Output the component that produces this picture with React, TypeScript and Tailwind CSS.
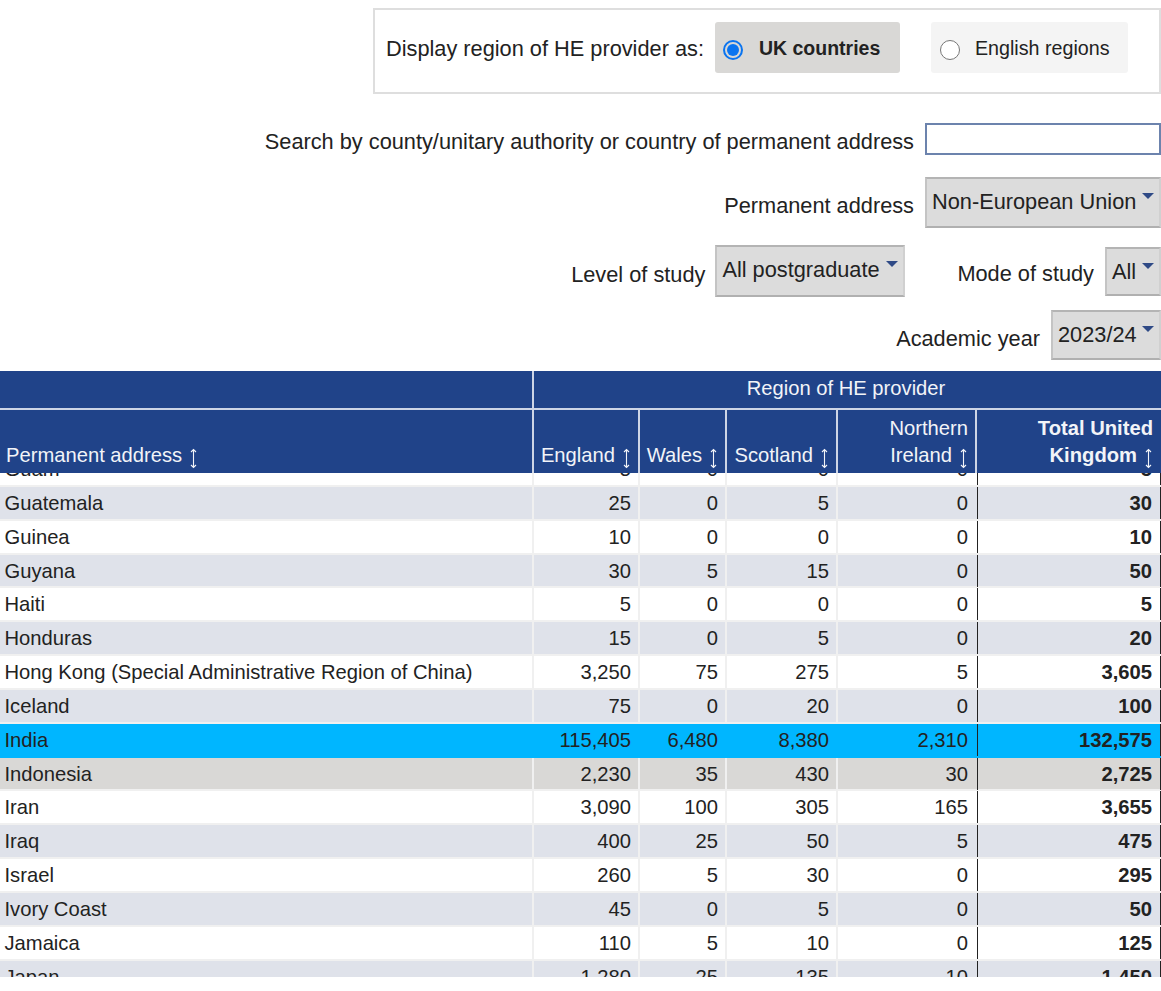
import React from "react"

const cols = "grid grid-cols-[534px_106px_87px_111px_139px_184px]"

const rows = [
  ["Guam", "5", "0", "0", "0", "5"],
  ["Guatemala", "25", "0", "5", "0", "30"],
  ["Guinea", "10", "0", "0", "0", "10"],
  ["Guyana", "30", "5", "15", "0", "50"],
  ["Haiti", "5", "0", "0", "0", "5"],
  ["Honduras", "15", "0", "5", "0", "20"],
  ["Hong Kong (Special Administrative Region of China)", "3,250", "75", "275", "5", "3,605"],
  ["Iceland", "75", "0", "20", "0", "100"],
  ["India", "115,405", "6,480", "8,380", "2,310", "132,575"],
  ["Indonesia", "2,230", "35", "430", "30", "2,725"],
  ["Iran", "3,090", "100", "305", "165", "3,655"],
  ["Iraq", "400", "25", "50", "5", "475"],
  ["Israel", "260", "5", "30", "0", "295"],
  ["Ivory Coast", "45", "0", "5", "0", "50"],
  ["Jamaica", "110", "5", "10", "0", "125"],
  ["Japan", "1,280", "25", "135", "10", "1,450"],
]

function SortIcon() {
  return (
    <svg width="9" height="21" viewBox="0 0 9 21" className="inline-block ml-[7px] -mb-1" fill="none" stroke="currentColor" strokeWidth="1.1">
      <path d="M4.5 1.5V19.5M2 4L4.5 1.5L7 4M2 17L4.5 19.5L7 17" />
    </svg>
  )
}

function Select({ value, className }: { value: string; className: string }) {
  return (
    <div className={"relative bg-[#dcdcdc] border-2 border-t-[#b4b4b4] border-l-[#c4c4c4] border-r-[#d0d0d0] border-b-[#b0b0b0] pl-[5px] text-[#222] whitespace-nowrap " + className}>
      <span className="block leading-[46px]">{value}</span>
      <span className="absolute right-[5px] top-[14px] w-0 h-0 border-x-[6px] border-x-transparent border-t-[6px] border-t-[#2f4a86]" />
    </div>
  )
}

export default function App() {
  return (
    <div className="w-[1161px] h-[991px] bg-white overflow-hidden text-[21.75px] leading-[24px] text-[#222] font-['Liberation_Sans',Arial,sans-serif]">
      <div className="flex justify-end pt-2">
        <div className="w-[788px] h-[86px] border-2 border-[#dedede] flex items-center pl-[11px]">
          <span className="-mt-[5px]">Display region of HE provider as:</span>
          <div className="ml-[11px] w-[185px] h-[51px] mb-[8px] bg-[#d9d8d6] rounded-[3px] flex items-center pl-[8px] text-[19.5px]">
            <span className="w-[20px] h-[20px] rounded-full border-2 border-[#0a74f0] flex items-center justify-center mt-[6px]">
              <span className="w-[12px] h-[12px] rounded-full bg-[#0a74f0]" />
            </span>
            <span className="ml-[16px] font-bold mt-[1px]">UK countries</span>
          </div>
          <div className="ml-[31px] w-[197px] h-[51px] mb-[8px] bg-[#f4f4f4] rounded-[3px] flex items-center pl-[9px] text-[19.7px]">
            <span className="w-[20px] h-[20px] rounded-full border border-[#767676] bg-white mt-[6px]" />
            <span className="ml-[15px] mt-[1px]">English regions</span>
          </div>
        </div>
      </div>

      <div className="flex justify-end items-center mt-[29px]">
        <span className="mt-[5px]">Search by county/unitary authority or country of permanent address</span>
        <div className="ml-[11px] w-[236px] h-[32px] border-2 border-[#6c83ad] bg-white" />
      </div>

      <div className="flex justify-end items-center mt-[22px]">
        <span className="mt-[6px]">Permanent address</span>
        <Select value="Non-European Union" className="ml-[11px] w-[236px] h-[51px]" />
      </div>

      <div className="flex justify-end items-center mt-[17px]">
        <span className="mt-[7px]">Level of study</span>
        <Select value="All postgraduate" className="ml-[10px] w-[190px] h-[52px]" />
        <span className="ml-[52px] mt-[6px]">Mode of study</span>
        <Select value="All" className="ml-[11px] w-[56px] h-[49px]" />
      </div>

      <div className="flex justify-end items-center mt-[13px]">
        <span className="mt-[8px]">Academic year</span>
        <Select value="2023/24" className="ml-[11px] w-[110px] h-[50px]" />
      </div>

      <div className="mt-[11px] w-[1161px] text-[20.2px]">
        <div className={cols + " bg-[#204389] text-[#f2f4f8] h-[39px] border-b-2 border-[#cdd5e6]"}>
          <div className="border-r-2 border-[#cdd5e6]" />
          <div className="col-span-5 text-center leading-[35px] pr-[3px]">Region of HE provider</div>
        </div>
        <div className={cols + " bg-[#204389] text-[#f2f4f8] h-[63px] leading-[27px]"}>
          <div className="border-r-2 border-[#cdd5e6] flex items-end pl-[6px] pb-[4px]">
            <span>Permanent address<SortIcon /></span>
          </div>
          <div className="border-r-2 border-[#cdd5e6] flex items-end justify-end pr-[7px] pb-[4px]">
            <span>England<SortIcon /></span>
          </div>
          <div className="border-r-2 border-[#cdd5e6] flex items-end justify-end pr-[7px] pb-[4px]">
            <span>Wales<SortIcon /></span>
          </div>
          <div className="border-r-2 border-[#cdd5e6] flex items-end justify-end pr-[7px] pb-[4px]">
            <span>Scotland<SortIcon /></span>
          </div>
          <div className="border-r-2 border-[#cdd5e6] flex items-end justify-end text-right pr-[7px] pb-[4px]">
            <span>Northern<br />Ireland<SortIcon /></span>
          </div>
          <div className="flex items-end justify-end text-right pr-[8px] pb-[4px] font-bold">
            <span>Total United<br />Kingdom<SortIcon /></span>
          </div>
        </div>

        <div className="h-[504px] overflow-hidden">
          <div className="-mt-[20px]">
            {rows.map((row, i) => {
              const india = row[0] === "India"
              const bg = india ? "bg-[#00b6ff]" : row[0] === "Indonesia" ? "bg-[#d9d8d6]" : i % 2 === 1 ? "bg-[#dfe2ea]" : "bg-white"
              const line = india ? "border-[#00b6ff]" : "border-[#f0f0f0]"
              return (
                <div key={row[0]} className={cols + " h-[33.85px] leading-[32px] border-b-2 " + line + " " + bg}>
                  <div className={"pl-[4.5px] border-r-2 whitespace-nowrap " + line}>{row[0]}</div>
                  <div className={"text-right pr-[7px] border-r-2 " + line}>{row[1]}</div>
                  <div className={"text-right pr-[7px] border-r-2 " + line}>{row[2]}</div>
                  <div className={"text-right pr-[7px] border-r-2 " + line}>{row[3]}</div>
                  <div className="text-right pr-[9px]">{row[4]}</div>
                  <div className="text-right pr-[8px] font-bold border-l border-l-[#222] border-r border-r-[#222]">{row[5]}</div>
                </div>
              )
            })}
          </div>
        </div>
      </div>
    </div>
  )
}
